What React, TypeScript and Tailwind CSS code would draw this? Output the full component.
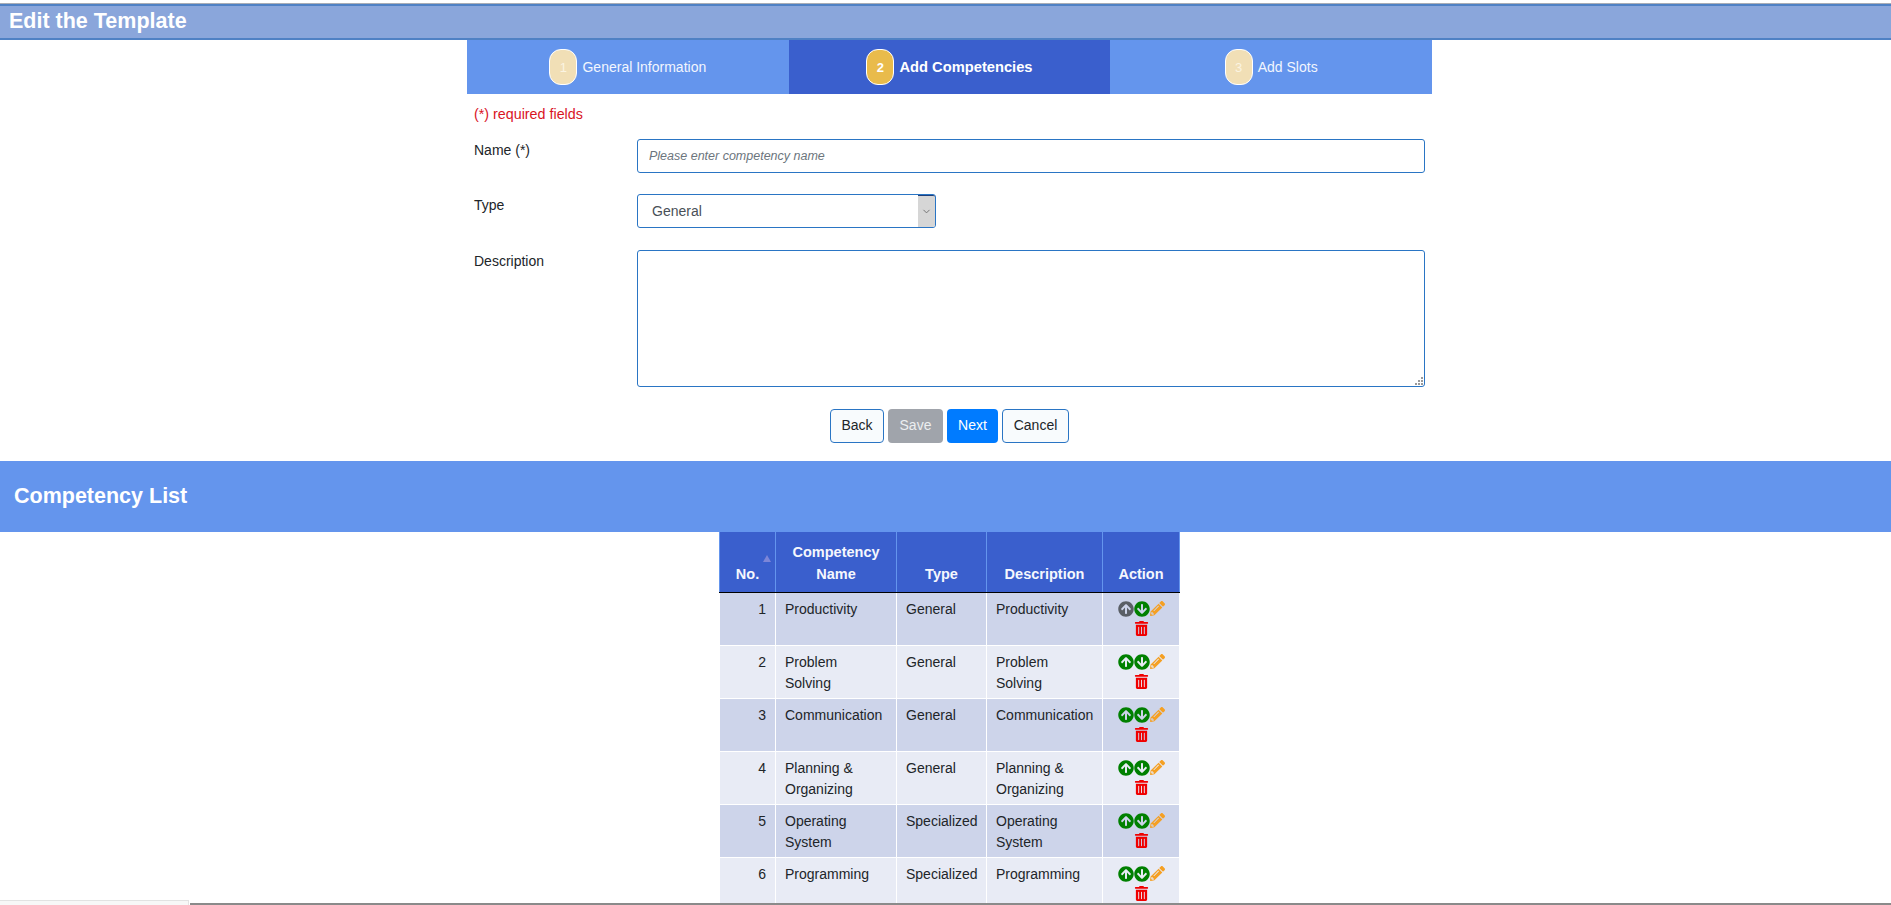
import React from 'react';
import { FaArrowCircleUp, FaArrowCircleDown, FaPencilAlt, FaTrashAlt } from 'react-icons/fa';
import { ChevronDown } from 'lucide-react';

const rows = [
  { no: 1, name: 'Productivity', type: 'General', desc: 'Productivity' },
  { no: 2, name: 'Problem Solving', type: 'General', desc: 'Problem Solving' },
  { no: 3, name: 'Communication', type: 'General', desc: 'Communication' },
  { no: 4, name: 'Planning & Organizing', type: 'General', desc: 'Planning & Organizing' },
  { no: 5, name: 'Operating System', type: 'Specialized', desc: 'Operating System' },
  { no: 6, name: 'Programming', type: 'Specialized', desc: 'Programming' },
];

const steps = [
  { no: 1, label: 'General Information', active: false },
  { no: 2, label: 'Add Competencies', active: true },
  { no: 3, label: 'Add Slots', active: false },
];

const Step = ({ no, label, active }: { no: number; label: string; active: boolean }) => (
  <div className={`flex flex-1 items-center justify-center gap-[5px] ${active ? 'bg-[#3a5fcd] text-[14.7px] font-bold text-white' : 'bg-[#6495ed] text-[#f2f6fe]'}`}>
    <span
      className={`flex h-[36px] w-[28px] items-center justify-center rounded-[12px] border border-white text-[13px] ${active ? 'bg-[#e9bb4b] font-bold text-white' : 'bg-[#f1dfb6] text-[#fbf4e2]'}`}
    >
      {no}
    </span>
    <span>{label}</span>
  </div>
);

const FormRow = ({ label, children, className }: { label: string; children: React.ReactNode; className: string }) => (
  <div className={`flex ${className}`}>
    <label className="w-[170px] pt-[1px] pl-[7px] text-[#212529]">{label}</label>
    {children}
  </div>
);

export default function App() {
  return (
    <div className="relative h-[905px] overflow-hidden bg-white font-['Liberation_Sans',Arial,sans-serif] text-[14px] leading-[21px]">
      <div className="pt-[3px]">
        <div className="border-t border-[#a9adb5]">
          <div className="flex h-[36px] items-center border-t-2 border-b-2 border-t-[#4f81c4] border-b-[#4f81c4] bg-[#8aa6db] pb-[1px] pl-[9px] text-[21.5px] font-bold text-white">
            Edit the Template
          </div>
        </div>
      </div>

      <div className="flex justify-center pl-[8px]">
        <div className="w-[965px]">
          <div className="flex h-[54px]">
            {steps.map((s) => (
              <Step key={s.no} {...s} />
            ))}
          </div>

          <p className="mt-[10px] pl-[7px] text-[14.3px] text-[#d9141f]">(*) required fields</p>

          <FormRow label="Name (*)" className="mt-[14px]">
            <input
              placeholder="Please enter competency name"
              className="h-[34px] w-[788px] rounded-[3px] border border-[#2a75c4] px-[11px] text-[12.5px] italic placeholder:text-[#6c757d]"
            />
          </FormRow>

          <FormRow label="Type" className="mt-[21px]">
            <div className="relative h-[34px] w-[299px] rounded-[3px] border border-[#2a75c4] pl-[14px] leading-[32px] text-[#495057]">
              General
              <span className="absolute top-0 right-0 flex h-[32px] w-[17px] items-center justify-center rounded-r-[2px] border-t border-t-[#1e3f7a] bg-[#d6d6d6]">
                <ChevronDown size={11} className="text-[#6c6c6c]" />
              </span>
            </div>
          </FormRow>

          <FormRow label="Description" className="mt-[22px]">
            <div className="relative">
              <textarea className="block h-[137px] w-[788px] resize-none rounded-[3px] border border-[#2a75c4]" />
              <svg width="9" height="9" viewBox="0 0 9 9" className="absolute right-[2px] bottom-[2px] fill-[#9a9a9a]">
                <rect x="7" y="1" width="2" height="2" />
                <rect x="4" y="4" width="2" height="2" />
                <rect x="7" y="4" width="2" height="2" />
                <rect x="1" y="7" width="2" height="2" />
                <rect x="4" y="7" width="2" height="2" />
                <rect x="7" y="7" width="2" height="2" />
              </svg>
            </div>
          </FormRow>

          <div className="mt-[22px] flex h-[34px] justify-center gap-[4px]">
            <button className="w-[54px] rounded-[4px] border border-[#2a75c4] bg-[#f8fbfd] pb-[1px] text-[#212529]">Back</button>
            <button className="w-[55px] rounded-[4px] bg-[#a0a4ab] pb-[1px] text-[#eceef0]">Save</button>
            <button className="w-[51px] rounded-[4px] bg-[#007bff] pb-[1px] text-white">Next</button>
            <button className="w-[67px] rounded-[4px] border border-[#2a75c4] bg-[#f8fbfd] pb-[1px] text-[#212529]">Cancel</button>
          </div>
        </div>
      </div>

      <div className="mt-[18px] flex h-[71px] items-center bg-[#6495ed] pb-[1px] pl-[14px] text-[21.5px] font-bold text-white">
        Competency List
      </div>

      <div className="flex justify-center pl-[8px]">
        <table className="w-[460px] table-fixed border-collapse">
          <colgroup>
            <col className="w-[56px]" />
            <col className="w-[121px]" />
            <col className="w-[90px]" />
            <col className="w-[116px]" />
            <col className="w-[77px]" />
          </colgroup>
          <thead>
            <tr className="h-[60px] bg-[#3a5fcd] text-[14.5px] font-bold text-[#f5f7fd]">
              <th className="relative border border-t-0 border-[#6495ed] border-b-black px-[9px] pb-[7px] align-bottom">
                No.
                <span className="absolute top-[23px] right-[4px] h-0 w-0 border-x-[4px] border-b-[7px] border-x-transparent border-b-[#7d86d8]" />
              </th>
              <th className="border border-t-0 border-[#6495ed] border-b-black px-[9px] pb-[7px] align-bottom leading-[22px]">Competency Name</th>
              <th className="border border-t-0 border-[#6495ed] border-b-black px-[9px] pb-[7px] align-bottom">Type</th>
              <th className="border border-t-0 border-[#6495ed] border-b-black px-[9px] pb-[7px] align-bottom">Description</th>
              <th className="border border-t-0 border-[#6495ed] border-b-black px-[9px] pb-[7px] align-bottom">Action</th>
            </tr>
          </thead>
          <tbody className="text-[#212529]">
            {rows.map((r, i) => (
              <tr key={r.no} className={`h-[53px] ${i % 2 === 0 ? 'bg-[#cdd4ea]' : 'bg-[#e8ebf5]'}`}>
                <td className="border border-t-0 border-white px-[9px] pt-[6px] pb-[4px] text-right align-top">{r.no}</td>
                <td className="border border-t-0 border-white pt-[6px] pr-[13px] pb-[4px] pl-[9px] align-top">{r.name}</td>
                <td className="border border-t-0 border-white px-[9px] pt-[6px] pb-[4px] align-top">{r.type}</td>
                <td className="border border-t-0 border-white px-[9px] pt-[6px] pb-[4px] align-top">{r.desc}</td>
                <td className="border border-t-0 border-white pt-[8px] align-top">
                  <div className="flex justify-center">
                    <FaArrowCircleUp size={16} className={i === 0 ? 'text-[#5a5f66]' : 'text-[#008000]'} />
                    <FaArrowCircleDown size={16} className="text-[#008000]" />
                    <FaPencilAlt size={15} className="text-[#f5a023]" />
                  </div>
                  <div className="mt-[4px] flex justify-center">
                    <FaTrashAlt size={15} className="text-[#f00000]" />
                  </div>
                </td>
              </tr>
            ))}
          </tbody>
        </table>
      </div>

      {/* bottom edge of the window */}
      <div className="absolute right-0 bottom-0 left-[190px] h-[2px] bg-[#8a8a8a]" />
      <div className="absolute bottom-0 left-0 h-[5px] w-[189px] border-t border-r border-[#e2e2e2] bg-[#f7f7f7]" />
    </div>
  );
}
